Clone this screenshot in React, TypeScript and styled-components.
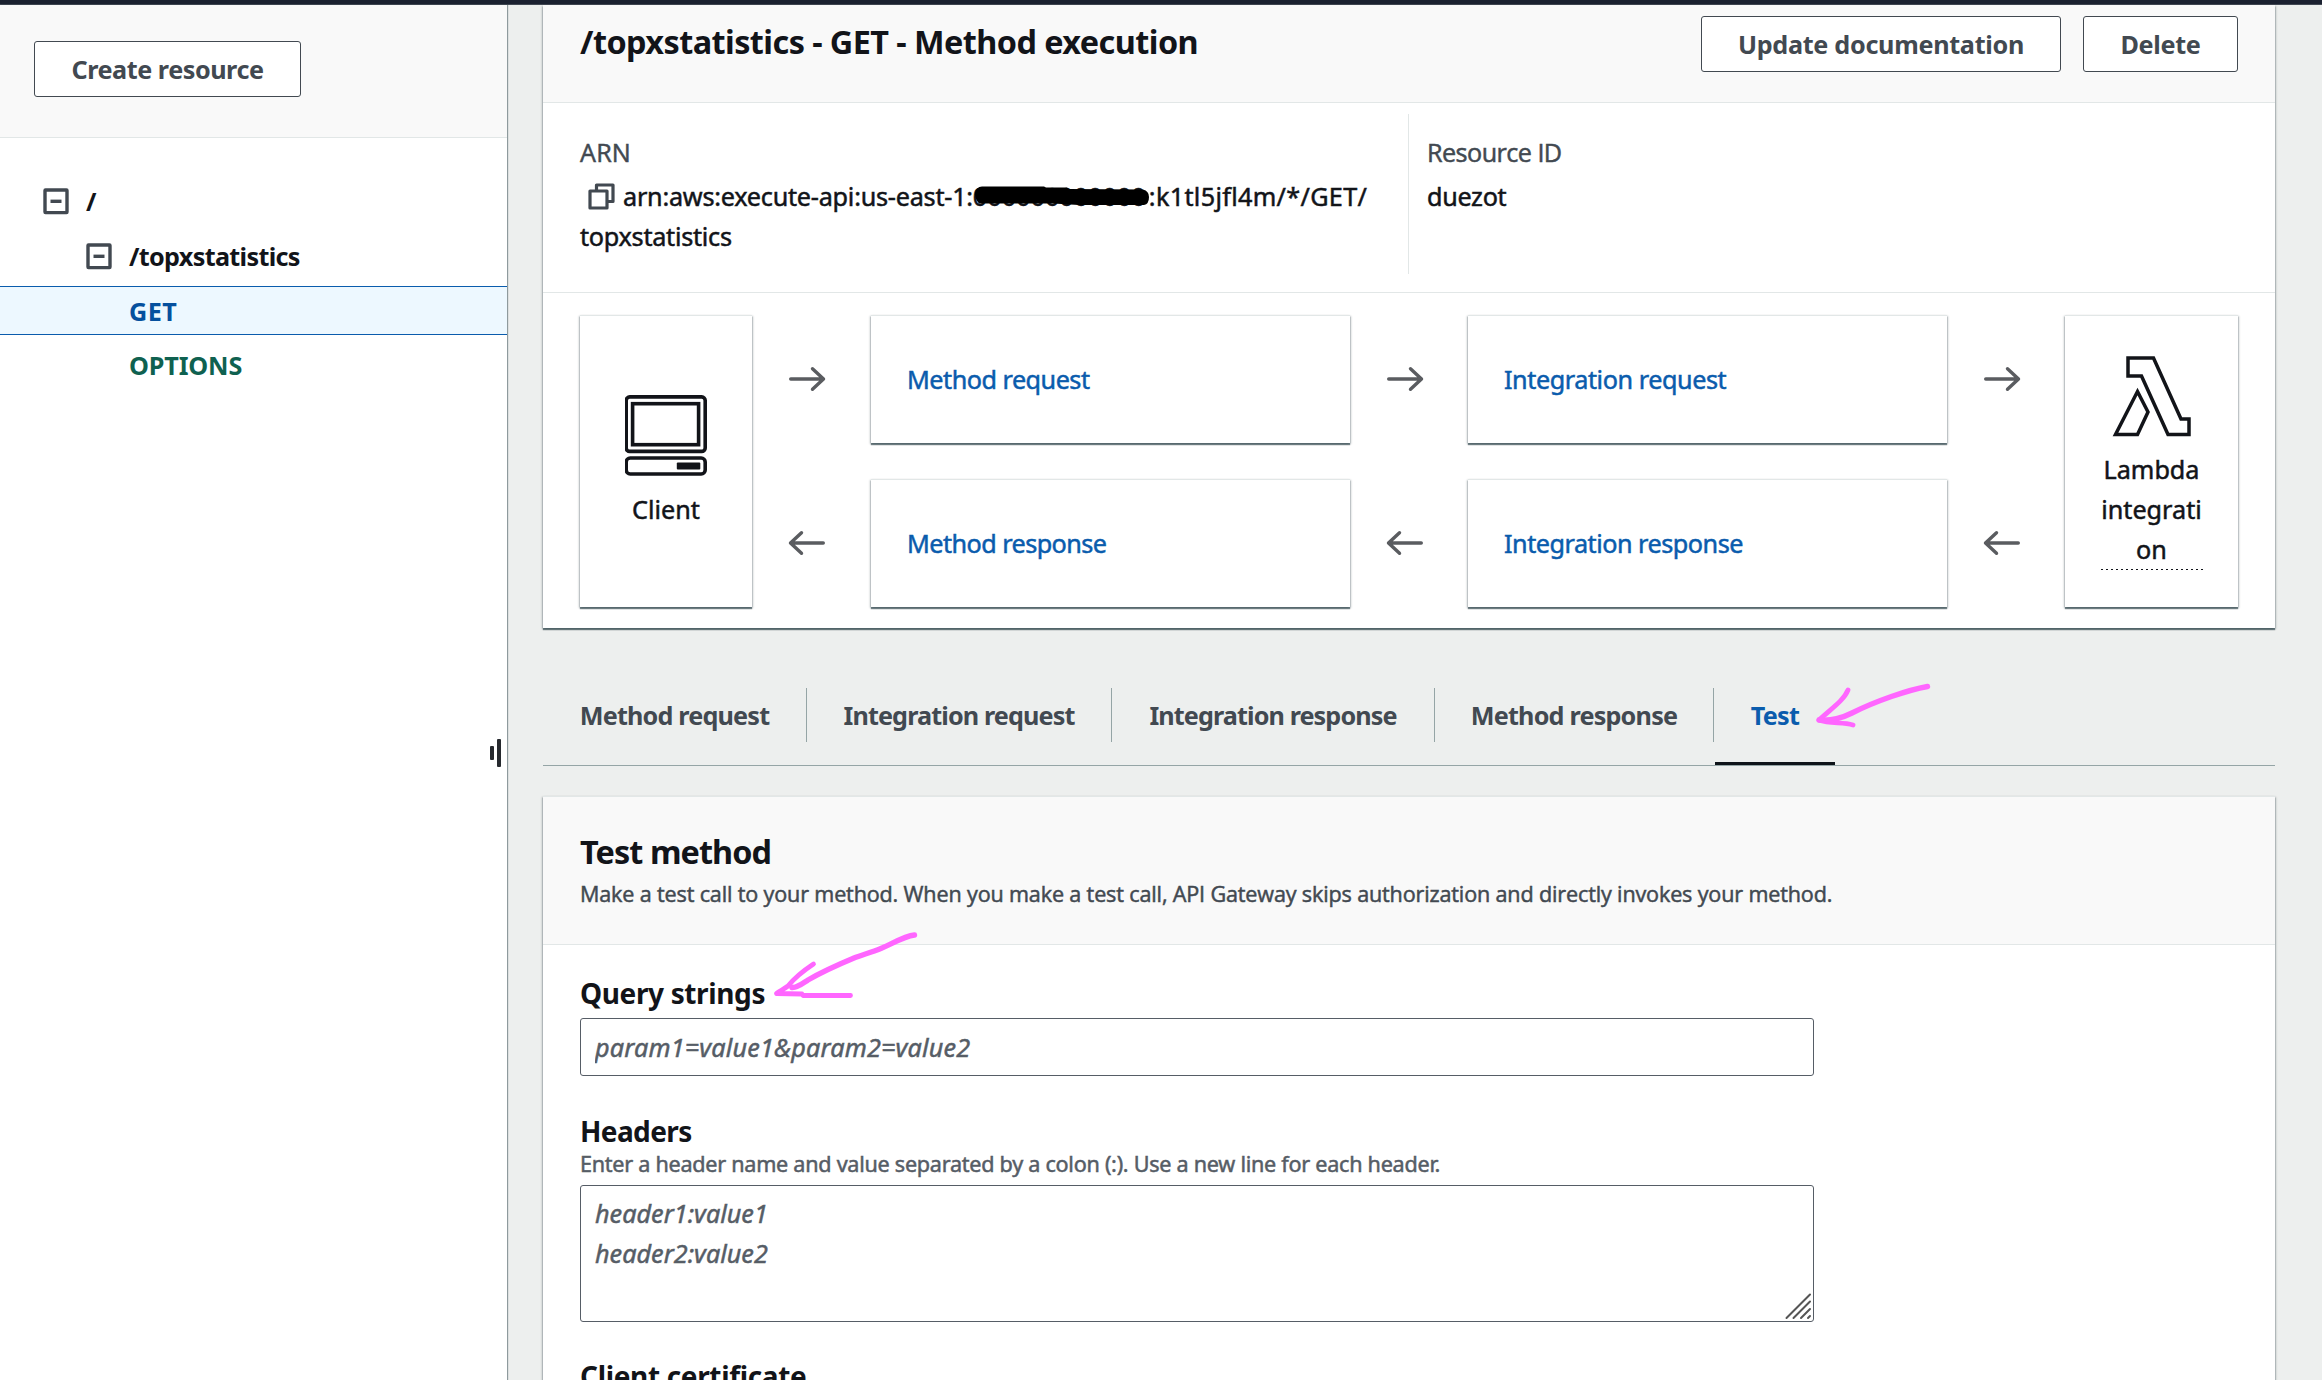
import React from "react";
import styled, { createGlobalStyle, css } from "styled-components";

const color = {
  ink: "#121419",
  dark: "#424951",
  slate: "#565d66",
  link: "#0a5cad",
  canvas: "#edefee",
  header: "#f9f9f9",
  line: "#e2e7e7",
  tabLine: "#95a5a6",
  mark: "#ff66ff",
};

const Global = createGlobalStyle`
  * { box-sizing: border-box; }
  html, body { margin: 0; height: 1380px; overflow: hidden; background: ${color.canvas}; }
  body {
    font: 400 25.2px/40px "Noto Sans", "Open Sans", sans-serif;
    color: ${color.ink};
    -webkit-text-stroke: 0.5px currentColor;
  }
`;

const cardShadow = css`
  box-shadow: 0 2px 1px 0 rgba(0, 28, 36, 0.5), 1px 1px 2px 0 rgba(0, 28, 36, 0.25),
    -1px 1px 2px 0 rgba(0, 28, 36, 0.25);
`;

const strong = css`
  font-weight: 700;
  -webkit-text-stroke-width: 0;
`;

const Text = styled.span<{ $ls?: number; $open?: boolean }>`
  letter-spacing: ${(p) => p.$ls ?? 0}px;
  white-space: nowrap;
  ${(p) => p.$open && css`font-family: "Open Sans", sans-serif;`}
`;

const Page = styled.div`
  position: relative;
  display: flex;
  flex-direction: column;
  width: 2322px;
  height: 1380px;
  overflow: hidden;
`;
const TopBar = styled.div`
  flex: none;
  height: 5px;
  background: #1b2130;
  border-bottom: 1px solid #414853;
`;
const Columns = styled.div`
  flex: 1;
  min-height: 0;
  display: flex;
`;

/* Resource tree */
const Sidebar = styled.aside`
  position: relative;
  flex: none;
  width: 507px;
  background: #fff;
  box-shadow: 1px 0 1px rgba(0, 28, 36, 0.4);
`;
const SidebarHeader = styled.div`
  height: 133px;
  padding: 36px 34px 0;
  background: ${color.header};
  border-bottom: 1px solid ${color.line};
`;
const Button = styled.button<{ $w: number }>`
  width: ${(p) => p.$w}px;
  height: 56px;
  padding: 0;
  border: 1px solid ${color.dark};
  border-radius: 3px;
  background: #fff;
  color: ${color.dark};
  font: inherit;
  ${strong}
`;
const Tree = styled.div`
  display: flex;
  flex-direction: column;
  gap: 6px;
  padding-top: 38px;
`;
const TreeRow = styled.div<{ $indent: number; $tone?: string; $active?: boolean }>`
  display: flex;
  align-items: center;
  gap: 17px;
  height: 49px;
  padding-left: ${(p) => p.$indent}px;
  border: solid ${(p) => (p.$active ? color.link : "transparent")};
  border-width: 1px 0;
  background: ${(p) => (p.$active ? "#edf8ff" : "transparent")};
  color: ${(p) => p.$tone ?? color.ink};
  ${strong}
  &:last-child {
    height: 48px;
  }
`;
const Toggle = styled.svg`
  flex: none;
  width: 26px;
  height: 27px;
  margin-top: 2px;
`;
const Handle = styled.div`
  position: absolute;
  right: 6px;
  top: 734px;
  display: flex;
  align-items: center;
  gap: 3px;
`;
const HandleBar = styled.i<{ $h: number }>`
  width: 4px;
  height: ${(p) => p.$h}px;
  border-radius: 1px;
  background: #26292e;
`;

/* Main column */
const Main = styled.main`
  flex: 1;
  min-width: 0;
  display: flex;
  flex-direction: column;
  padding: 0 47px 0 36px;
`;
const Panel = styled.section<{ $top?: number; $h: number }>`
  flex: none;
  height: ${(p) => p.$h}px;
  margin-top: ${(p) => p.$top ?? 0}px;
  background: #fff;
  ${cardShadow}
`;
const ExecHeader = styled.header`
  display: flex;
  align-items: flex-start;
  gap: 22px;
  height: 98px;
  padding: 11px 37px 0;
  background: ${color.header};
  border-bottom: 1px solid ${color.line};
`;
const Title = styled.h2<{ $lh: number }>`
  flex: 1;
  margin: 0;
  font-size: 32.4px;
  line-height: ${(p) => p.$lh}px;
  ${strong}
`;
const Details = styled.div`
  display: flex;
  height: 190px;
  padding: 11px 37px 18px;
  border-bottom: 1px solid ${color.line};
`;
const Detail = styled.div<{ $w?: number }>`
  flex: none;
  ${(p) => (p.$w ? `width: ${p.$w}px;` : `padding-left: 18px; border-left: 1px solid ${color.line};`)}
  padding-top: 18px;
`;
const DetailLabel = styled.div`
  margin-bottom: 4px;
  color: ${color.dark};
`;
const Value = styled.div`
  height: 40px;
  white-space: nowrap;
`;
const CopyIcon = styled.svg`
  width: 27px;
  height: 27px;
  margin: 0 8px 0 8px;
  vertical-align: -4px;
`;
const Redacted = styled.span`
  position: relative;
  display: inline-block;
  width: 176px;
`;
const Scribble = styled.svg`
  position: absolute;
  left: -2px;
  top: 9px;
  width: 180px;
  height: 22px;
`;

/* Request flow diagram */
const Flow = styled.div`
  display: grid;
  grid-template-columns: 172px 119px 479px 118px 479px 118px 173px;
  grid-template-rows: 128px 128px;
  row-gap: 36px;
  padding: 22px 37px 0;
`;
const Endpoint = styled.div<{ $col: number; $shift?: number }>`
  grid-column: ${(p) => p.$col};
  grid-row: 1 / 3;
  display: flex;
  flex-direction: column;
  align-items: center;
  justify-content: center;
  gap: 13px;
  padding-top: ${(p) => p.$shift ?? 0}px;
  border-top: 1px solid ${color.line};
  ${cardShadow}
`;
const EndpointArt = styled.svg`
  width: 83px;
  height: 81px;
`;
const IntegrationName = styled.div`
  width: 102px;
  height: 121px;
  margin-top: -1px;
  text-align: center;
  overflow-wrap: anywhere;
  background: repeating-linear-gradient(90deg, ${color.ink} 0 2px, transparent 2px 5px) bottom / 100% 1px no-repeat;
`;
const Step = styled.a<{ $col: number; $row: number }>`
  grid-column: ${(p) => p.$col};
  grid-row: ${(p) => p.$row};
  display: flex;
  align-items: center;
  padding: 0 0 2px 36px;
  border-top: 1px solid ${color.line};
  color: ${color.link};
  ${cardShadow}
`;
const ArrowCell = styled.div<{ $col: number; $row: number }>`
  grid-column: ${(p) => p.$col};
  grid-row: ${(p) => p.$row};
  display: flex;
  align-items: center;
  padding-left: 36px;
`;
const ArrowArt = styled.svg<{ $flip?: boolean }>`
  width: 38px;
  height: 26px;
  transform: ${(p) => (p.$flip ? "scaleX(-1)" : "none")};
`;

/* Tabs */
const Tabs = styled.nav`
  flex: none;
  display: flex;
  height: 78px;
  margin-top: 60px;
  border-bottom: 1px solid ${color.tabLine};
`;
const Tab = styled.div<{ $w: number; $active?: boolean }>`
  width: ${(p) => p.$w}px;
  height: 77px;
  margin-left: ${(p) => (p.$active ? 1 : 0)}px;
  padding-bottom: 20px;
  border-bottom: 3px solid ${(p) => (p.$active ? "#0f141a" : "transparent")};
  color: ${(p) => (p.$active ? color.link : color.dark)};
  ${strong}
`;
const TabLabel = styled.div<{ $last?: boolean }>`
  display: flex;
  align-items: center;
  justify-content: center;
  height: 54px;
  border-right: ${(p) => (p.$last ? "0" : `1px solid ${color.tabLine}`)};
`;

/* Test form */
const TestHeader = styled.header`
  height: 149px;
  padding: 33px 37px 0;
  border-top: 1px solid ${color.line};
  border-bottom: 1px solid ${color.line};
  background: ${color.header};
`;
const Description = styled.p`
  margin: 4px 0 0;
  font-size: 21.6px;
  line-height: 36px;
  color: ${color.dark};
`;
const Form = styled.div`
  display: flex;
  flex-direction: column;
  width: 1308px;
  padding: 28px 37px 0;
`;
const Label = styled.label<{ $top?: number }>`
  margin-top: ${(p) => p.$top ?? 0}px;
  font-size: 28px;
  line-height: 40px;
  ${strong}
`;
const Hint = styled.div`
  margin-top: 1px;
  font-size: 21.6px;
  line-height: 24px;
  color: ${color.slate};
`;
const fieldStyle = css`
  width: 100%;
  border: 1px solid ${color.slate};
  border-radius: 3px;
  background: #fff;
  font: inherit;
  &::placeholder {
    color: ${color.slate};
    opacity: 1;
    font-style: italic;
  }
`;
const Input = styled.input`
  ${fieldStyle}
  height: 58px;
  margin-top: 5px;
  padding: 0 14px;
  letter-spacing: 0.19px;
`;
const AreaWrap = styled.div`
  position: relative;
  height: 137px;
  margin-top: 9px;
`;
const Area = styled.textarea`
  ${fieldStyle}
  display: block;
  height: 137px;
  padding: 7px 14px;
  resize: none;
  letter-spacing: 0.02px;
`;
const Grip = styled.svg`
  position: absolute;
  right: 2px;
  bottom: 2px;
  width: 27px;
  height: 27px;
`;
const Mark = styled.svg<{ $x: number; $y: number }>`
  position: absolute;
  left: ${(p) => p.$x}px;
  top: ${(p) => p.$y}px;
  overflow: visible;
  fill: none;
  stroke: ${color.mark};
  stroke-linecap: round;
  stroke-linejoin: round;
`;

const Collapse = () => (
  <Toggle viewBox="0 0 26 27" fill="none" stroke={color.dark} strokeWidth="3.4">
    <rect x="2" y="2" width="22" height="22.6" rx="0.5" />
    <path d="M7.5 13.3h11" />
  </Toggle>
);

const Arrow = ({ col, row }: { col: number; row: number }) => (
  <ArrowCell $col={col} $row={row}>
    <ArrowArt
      $flip={row === 2}
      viewBox="0 0 38 26"
      fill="none"
      stroke="#5a5c60"
      strokeWidth="3.4"
      strokeLinecap="round"
      strokeLinejoin="round"
    >
      <path d="M2.7 13H35.5M24.5 2.7L35.5 13 24.5 23.3" />
    </ArrowArt>
  </ArrowCell>
);

const steps = [
  { label: "Method request", col: 3, row: 1, ls: -0.5 },
  { label: "Integration request", col: 5, row: 1, ls: -0.43 },
  { label: "Method response", col: 3, row: 2, ls: -0.55 },
  { label: "Integration response", col: 5, row: 2, ls: -0.48 },
];

const tabs = [
  { label: "Method request", w: 264, ls: -0.82 },
  { label: "Integration request", w: 305, ls: -0.88 },
  { label: "Integration response", w: 323, ls: -0.9 },
  { label: "Method response", w: 279, ls: -0.8 },
  { label: "Test", w: 120, ls: -0.7 },
];

export default function App() {
  return (
    <Page>
      <Global />
      <TopBar />
      <Columns>
        <Sidebar>
          <SidebarHeader>
            <Button $w={267}><Text $ls={-0.46}>Create resource</Text></Button>
          </SidebarHeader>
          <Tree>
            <TreeRow $indent={43}><Collapse /><Text>/</Text></TreeRow>
            <TreeRow $indent={86}><Collapse /><Text $ls={-0.68}>/topxstatistics</Text></TreeRow>
            <TreeRow $indent={129} $tone="#05509e" $active><Text $ls={0.5}>GET</Text></TreeRow>
            <TreeRow $indent={129} $tone="#0f6150"><Text $ls={-0.15}>OPTIONS</Text></TreeRow>
          </Tree>
          <Handle><HandleBar $h={14} /><HandleBar $h={28} /></Handle>
        </Sidebar>

        <Main>
          <Panel $h={623}>
            <ExecHeader>
              <Title $lh={51}><Text $ls={-0.56}>/topxstatistics - GET - Method execution</Text></Title>
              <Button $w={360}><Text $ls={-0.3}>Update documentation</Text></Button>
              <Button $w={155}><Text $ls={-0.33}>Delete</Text></Button>
            </ExecHeader>
            <Details>
              <Detail $w={828}>
                <DetailLabel><Text $open $ls={0.2}>ARN</Text></DetailLabel>
                <Value>
                  <CopyIcon viewBox="0 0 27 27" fill="none" stroke={color.dark} strokeWidth="3.2" strokeLinejoin="round">
                    <path d="M8.5 7V2H25V18.5H20" />
                    <rect x="2" y="8" width="17" height="17" />
                  </CopyIcon>
                  <Text $ls={-0.23}>arn:aws:execute-api:us-east-1:</Text>
                  <Redacted>
                    <Text>000000000000</Text>
                    <Scribble viewBox="0 0 180 22">
                      <path d="M4 8Q5 2 11 1.5L73 1.5 75 2.5 96 2.5 98 4 172 4.5Q178 6 178 12 178 19 173 20L108 20 82 18.5 8 18.5Q4 14 4 8Z" />
                    </Scribble>
                  </Redacted>
                  <Text $ls={0.32}>:k1tl5jfl4m/*/GET/</Text>
                </Value>
                <Value><Text $ls={-0.26}>topxstatistics</Text></Value>
              </Detail>
              <Detail>
                <DetailLabel><Text $open $ls={-0.55}>Resource ID</Text></DetailLabel>
                <Value><Text $ls={-0.3}>duezot</Text></Value>
              </Detail>
            </Details>
            <Flow>
              <Endpoint $col={1}>
                <EndpointArt viewBox="0.7 0 83 81" fill="none" stroke={color.ink} strokeWidth="3.6">
                  <rect x="1.9" y="1.9" width="79" height="54.5" rx="3.5" />
                  <rect x="8.3" y="8.7" width="66" height="41" />
                  <rect x="1.9" y="63" width="79" height="16" rx="4" />
                  <rect x="52.5" y="67.5" width="23.5" height="7" rx="1" fill={color.ink} stroke="none" />
                </EndpointArt>
                <Text>Client</Text>
              </Endpoint>
              {[2, 4, 6].map((col) => [1, 2].map((row) => <Arrow key={`${col}-${row}`} col={col} row={row} />))}
              {steps.map((s) => (
                <Step key={s.label} $col={s.col} $row={s.row}><Text $ls={s.ls}>{s.label}</Text></Step>
              ))}
              <Endpoint $col={7} $shift={2}>
                <EndpointArt viewBox="0 0 83 81" fill="none" stroke={color.ink} strokeWidth="3.5">
                  <path d="M18 2H43.5L71 63H79V78.5H58L31.5 20H18Z" />
                  <path d="M27.5 35.5L38 56 27.5 78.5H5.5Z" />
                </EndpointArt>
                <IntegrationName>Lambda integration</IntegrationName>
              </Endpoint>
            </Flow>
          </Panel>

          <Tabs>
            {tabs.map((t, i) => (
              <Tab key={t.label} $w={t.w} $active={i === 4}>
                <TabLabel $last={i === 4}><Text $ls={t.ls}>{t.label}</Text></TabLabel>
              </Tab>
            ))}
          </Tabs>

          <Panel $top={30} $h={700}>
            <TestHeader>
              <Title $lh={42}><Text $ls={-0.92}>Test method</Text></Title>
              <Description>
                <Text $open $ls={-0.155}>
                  Make a test call to your method. When you make a test call, API Gateway skips authorization and directly invokes your method.
                </Text>
              </Description>
            </TestHeader>
            <Form>
              <Label><Text $ls={-0.37}>Query strings</Text></Label>
              <Input placeholder="param1=value1&param2=value2" />
              <Label $top={35}><Text $ls={-0.6}>Headers</Text></Label>
              <Hint><Text $ls={-0.265}>Enter a header name and value separated by a colon (:). Use a new line for each header.</Text></Hint>
              <AreaWrap>
                <Area placeholder={"header1:value1\nheader2:value2"} />
                <Grip viewBox="0 0 27 27" stroke="#555" strokeWidth="2" strokeLinecap="round">
                  <path d="M1.5 25L25 1.5M8.5 25L25 8.5M16 25L25 16M23 25L25 23" />
                </Grip>
              </AreaWrap>
              <Label $top={34}><Text $ls={-0.34}>Client certificate</Text></Label>
            </Form>
          </Panel>
        </Main>
      </Columns>

      <Mark $x={1816} $y={684} width="116" height="44" strokeWidth="5.4">
        <path d="M111.5 2.5C92 6 60 17 36 29 26 34 15 37 3 36" />
        <path d="M32 6C28 16 16 24 3 36 14 40 26 38 37 41" strokeWidth="4.8" />
      </Mark>
      <Mark $x={760} $y={920} width="170" height="90" strokeWidth="5.4">
        <path d="M154.5 15C144 16 130 25 122 28 110 33 101 35 94 38 70 48 60 53 48 60 42 64 37 68 32 67.5" />
        <path d="M53.5 44C43 51 32 61 28 66 24 69 20 71 16.5 73.5L42 74 43 75.5H90.5" strokeWidth="4.8" />
      </Mark>
    </Page>
  );
}
